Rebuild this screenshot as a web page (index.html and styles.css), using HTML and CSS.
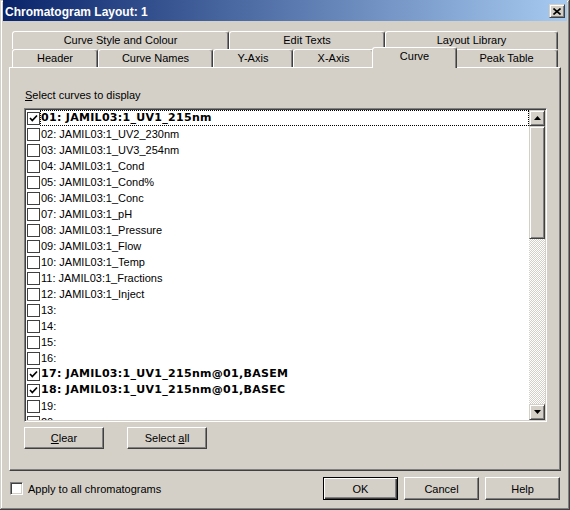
FILE: index.html
```html
<!DOCTYPE html>
<html>
<head>
<meta charset="utf-8">
<link rel="stylesheet" href="styles.css">
</head>
<body>
<div class="window">
  <div class="titlebar">
    <span class="title">Chromatogram Layout: 1</span>
    <div class="close raised-sb">
      <svg width="8" height="7" viewBox="0 0 8 7"><path d="M0.5 0.5 L7.5 6.5 M7.5 0.5 L0.5 6.5" stroke="#000" stroke-width="1.6"/></svg>
    </div>
  </div>

  <div class="tabs">
    <div class="tabrow">
      <div class="tab w-style">Curve Style and Colour</div>
      <div class="tab w-edit">Edit Texts</div>
      <div class="tab w-lib">Layout Library</div>
    </div>
    <div class="tabrow">
      <div class="tab w-header">Header</div>
      <div class="tab w-names">Curve Names</div>
      <div class="tab w-yaxis">Y-Axis</div>
      <div class="tab w-xaxis">X-Axis</div>
      <div class="tab w-curve selected">Curve</div>
      <div class="tab w-peak">Peak Table</div>
    </div>
  </div>

  <div class="panel">
    <div class="label"><u>S</u>elect curves to display</div>
    <div class="listbox">
      <div class="rows">
        <div class="row bold"><span class="cb checked"><svg width="11" height="11" viewBox="0 0 11 11"><path d="M2 5 L4.3 7.5 L9 2.5" fill="none" stroke="#000" stroke-width="1.7"/></svg></span><span class="txt focus">01: JAMIL03:1_UV1_215nm</span></div>
        <div class="row"><span class="cb"></span><span class="txt">02: JAMIL03:1_UV2_230nm</span></div>
        <div class="row"><span class="cb"></span><span class="txt">03: JAMIL03:1_UV3_254nm</span></div>
        <div class="row"><span class="cb"></span><span class="txt">04: JAMIL03:1_Cond</span></div>
        <div class="row"><span class="cb"></span><span class="txt">05: JAMIL03:1_Cond%</span></div>
        <div class="row"><span class="cb"></span><span class="txt">06: JAMIL03:1_Conc</span></div>
        <div class="row"><span class="cb"></span><span class="txt">07: JAMIL03:1_pH</span></div>
        <div class="row"><span class="cb"></span><span class="txt">08: JAMIL03:1_Pressure</span></div>
        <div class="row"><span class="cb"></span><span class="txt">09: JAMIL03:1_Flow</span></div>
        <div class="row"><span class="cb"></span><span class="txt">10: JAMIL03:1_Temp</span></div>
        <div class="row"><span class="cb"></span><span class="txt">11: JAMIL03:1_Fractions</span></div>
        <div class="row"><span class="cb"></span><span class="txt">12: JAMIL03:1_Inject</span></div>
        <div class="row"><span class="cb"></span><span class="txt">13:</span></div>
        <div class="row"><span class="cb"></span><span class="txt">14:</span></div>
        <div class="row"><span class="cb"></span><span class="txt">15:</span></div>
        <div class="row"><span class="cb"></span><span class="txt">16:</span></div>
        <div class="row bold"><span class="cb checked"><svg width="11" height="11" viewBox="0 0 11 11"><path d="M2 5 L4.3 7.5 L9 2.5" fill="none" stroke="#000" stroke-width="1.7"/></svg></span><span class="txt">17: JAMIL03:1_UV1_215nm@01,BASEM</span></div>
        <div class="row bold"><span class="cb checked"><svg width="11" height="11" viewBox="0 0 11 11"><path d="M2 5 L4.3 7.5 L9 2.5" fill="none" stroke="#000" stroke-width="1.7"/></svg></span><span class="txt">18: JAMIL03:1_UV1_215nm@01,BASEC</span></div>
        <div class="row"><span class="cb"></span><span class="txt">19:</span></div>
        <div class="row"><span class="cb"></span><span class="txt">20:</span></div>
      </div>
      <div class="scrollbar">
        <div class="sbbtn raised-sb"><svg width="7" height="4" viewBox="0 0 7 4"><path d="M3.5 0 L7 4 L0 4 Z" fill="#000"/></svg></div>
        <div class="thumb raised-sb"></div>
        <div class="track"></div>
        <div class="sbbtn raised-sb"><svg width="7" height="4" viewBox="0 0 7 4"><path d="M0 0 L7 0 L3.5 4 Z" fill="#000"/></svg></div>
      </div>
    </div>
    <div class="panel-buttons">
      <div class="btn btn-small"><span><u>C</u>lear</span></div>
      <div class="btn btn-small"><span>Select <u>a</u>ll</span></div>
    </div>
  </div>

  <div class="footer">
    <span class="check3d"></span>
    <span class="apply">Apply to all chromatograms</span>
    <span class="spacer"></span>
    <div class="btn btn-dlg default">OK</div>
    <div class="btn btn-dlg">Cancel</div>
    <div class="btn btn-dlg">Help</div>
  </div>
</div>
</body>
</html>
```
FILE: styles.css
```css
* { box-sizing: border-box; }

body {
  margin: 0;
  background: #d4d0c8;
  font-family: "Liberation Sans", Arial, sans-serif;
  font-size: 11px;
  color: #000;
}

.window {
  width: 570px;
  height: 510px;
  padding: 0 3px 3px 3px;
  display: flex;
  flex-direction: column;
  background: #d4d0c8;
  box-shadow: inset -1px -1px #404040, inset 1px 1px #d4d0c8, inset -2px -2px #808080, inset 2px 2px #fff;
}

.titlebar {
  height: 21px;
  flex: none;
  display: flex;
  align-items: center;
  padding: 0 2px 0 2px;
  background: linear-gradient(to right, #0a246a, #a6caf0);
  color: #fff;
}

.title {
  flex: 1;
  font-weight: bold;
  font-size: 12px;
  padding-top: 2px;
}

.raised-sb {
  background: #d4d0c8;
  border: 1px solid;
  border-color: #d4d0c8 #404040 #404040 #d4d0c8;
  box-shadow: inset 1px 1px #fff, inset -1px -1px #808080;
}

.close {
  width: 16px;
  height: 14px;
  display: flex;
  align-items: center;
  justify-content: center;
  margin-top: 1px;
}

.tabs {
  margin: 10px 0 0 9px;
  flex: none;
}

.tabrow {
  display: flex;
  height: 18px;
  align-items: flex-start;
}

.tab {
  height: 18px;
  border: 1px solid;
  border-bottom: none;
  border-color: #fff #404040 transparent #fff;
  border-radius: 3px 3px 0 0;
  box-shadow: inset -1px 0 #808080;
  background: #d4d0c8;
  text-align: center;
  line-height: 17px;
  white-space: nowrap;
}

.tab.selected {
  height: 21px;
  margin-top: -2px;
  margin-left: -2px;
  margin-right: -2px;
  position: relative;
  z-index: 2;
  line-height: 16px;
}

.w-style { width: 217px; }
.w-edit { width: 156px; }
.w-lib { width: 173px; }
.w-header { width: 86px; }
.w-names { width: 115px; }
.w-yaxis { width: 80px; }
.w-xaxis { width: 81px; }
.w-curve { width: 85px; }
.w-peak { width: 103px; }

.panel {
  margin-left: 6px;
  width: 552px;
  height: 404px;
  flex: none;
  border: 1px solid;
  border-color: #fff #404040 #404040 #fff;
  box-shadow: inset -1px -1px #808080;
  padding: 21px 0 0 14px;
}

.label {
  height: 13px;
  line-height: 13px;
  padding-left: 1px;
}

.listbox {
  margin-top: 6px;
  width: 523px;
  height: 314px;
  display: flex;
  background: #fff;
  border: 1px solid;
  border-color: #808080 #fff #fff #808080;
  box-shadow: inset 1px 1px #404040, inset -1px -1px #d4d0c8;
  padding: 1px;
}

.rows {
  flex: 1;
  overflow: hidden;
}

.row {
  height: 16px;
  display: flex;
  align-items: center;
}

.cb {
  width: 13px;
  height: 13px;
  flex: none;
  border: 1px solid #404040;
  background: #fff;
  margin-left: 1px;
  display: flex;
  align-items: center;
  justify-content: center;
}

.txt {
  flex: 1;
  height: 16px;
  line-height: 14px;
  border: 1px dotted transparent;
  padding-left: 0;
  white-space: nowrap;
}

.txt.focus {
  border-color: #000;
}

.row.bold .txt {
  font-family: "DejaVu Sans", sans-serif;
  font-weight: bold;
  font-size: 11px;
  letter-spacing: 0.3px;
}

.scrollbar {
  width: 16px;
  flex: none;
  display: flex;
  flex-direction: column;
}

.sbbtn {
  height: 16px;
  flex: none;
  display: flex;
  align-items: center;
  justify-content: center;
}

.thumb {
  height: 113px;
  flex: none;
}

.track {
  flex: 1;
  background-color: #fff;
  background-image: conic-gradient(#d4d0c8 25%, #fff 0 50%, #d4d0c8 0 75%, #fff 0);
  background-size: 2px 2px;
}

.panel-buttons {
  display: flex;
  gap: 23px;
  margin-top: 5px;
}

.btn {
  display: flex;
  align-items: center;
  justify-content: center;
  background: #d4d0c8;
  border: 1px solid;
  border-color: #fff #404040 #404040 #fff;
  box-shadow: inset -1px -1px #808080;
  white-space: pre;
}

.btn-small {
  width: 80px;
  height: 22px;
}

.footer {
  display: flex;
  align-items: center;
  margin-top: 6px;
  height: 23px;
  padding: 0 7px;
}

.check3d {
  width: 13px;
  height: 13px;
  background: #fff;
  border: 1px solid;
  border-color: #808080 #fff #fff #808080;
  box-shadow: inset 1px 1px #404040, inset -1px -1px #d4d0c8;
}

.apply {
  margin-left: 5px;
}

.spacer { flex: 1; }

.btn-dlg {
  width: 75px;
  height: 23px;
  margin-left: 6px;
}

.btn-dlg.default {
  border-color: #000;
  box-shadow: inset 1px 1px #fff, inset -1px -1px #404040, inset -2px -2px #808080;
}
```
